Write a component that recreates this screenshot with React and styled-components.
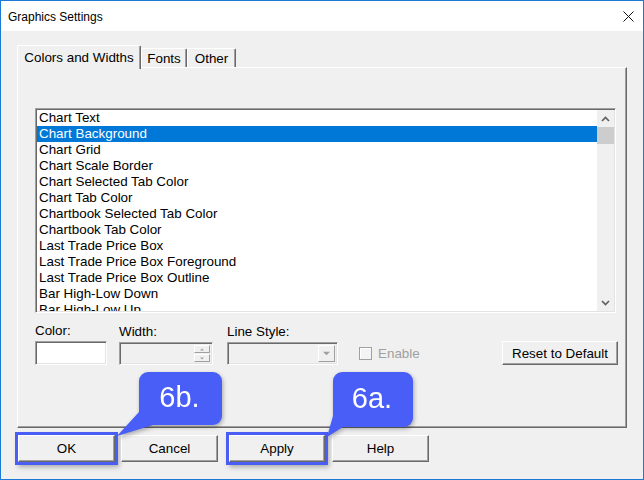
import React, { useState } from 'react';
import styled, { createGlobalStyle } from 'styled-components';

const GlobalStyle = createGlobalStyle`
  html, body {
    margin: 0;
    padding: 0;
    background: #ffffff;
  }
  * {
    box-sizing: border-box;
  }
`;

const items = [
  'Chart Text',
  'Chart Background',
  'Chart Grid',
  'Chart Scale Border',
  'Chart Selected Tab Color',
  'Chart Tab Color',
  'Chartbook Selected Tab Color',
  'Chartbook Tab Color',
  'Last Trade Price Box',
  'Last Trade Price Box Foreground',
  'Last Trade Price Box Outline',
  'Bar High-Low Down',
  'Bar High-Low Up',
];

const Window = styled.div`
  position: relative;
  width: 644px;
  height: 480px;
  border: 1px solid #1c7ad6;
  display: flex;
  flex-direction: column;
  background: #f0f0f0;
  font-family: "Liberation Sans", Arial, sans-serif;
  font-size: 13px;
  color: #000;
`;

const TitleBar = styled.div`
  height: 30px;
  flex: none;
  background: #ffffff;
  display: flex;
  align-items: center;
  justify-content: space-between;
  padding: 1px 9px 0 7px;
  font-size: 12px;
`;

const Body = styled.div`
  flex: 1;
  display: flex;
  flex-direction: column;
  padding: 14px 0 0 16px;
`;

const TabStrip = styled.div`
  height: 22px;
  display: flex;
  align-items: flex-end;
`;

const Tab = styled.div`
  position: relative;
  z-index: ${(p) => (p.$active ? 2 : 1)};
  width: ${(p) => p.$w}px;
  height: ${(p) => (p.$active ? 24 : 19)}px;
  margin-bottom: ${(p) => (p.$active ? -2 : 0)}px;
  background: #f0f0f0;
  border-top: 1px solid #ffffff;
  border-left: 1px solid #ffffff;
  border-right: 1px solid #696969;
  box-shadow: inset -1px 0 #a0a0a0;
  border-radius: 2px 2px 0 0;
  display: flex;
  align-items: ${(p) => (p.$active ? 'flex-start' : 'center')};
  justify-content: center;
  padding-top: ${(p) => (p.$active ? 4 : 1)}px;
  font-size: 13.4px;
`;

const Panel = styled.div`
  width: 610px;
  height: 361px;
  border-top: 1px solid #ffffff;
  border-left: 1px solid #ffffff;
  border-right: 1px solid #696969;
  border-bottom: 1px solid #696969;
  box-shadow: inset -1px -1px #a0a0a0;
  padding: 40px 8px 0 17px;
  display: flex;
  flex-direction: column;
`;

const ListBox = styled.div`
  width: 581px;
  height: 205px;
  border: 1px solid;
  border-color: #a0a0a0 #ffffff #ffffff #a0a0a0;
  box-shadow: inset 1px 1px #696969, inset -1px -1px #e3e3e3;
  padding: 1px;
  display: flex;
  background: #ffffff;
`;

const Items = styled.div`
  flex: 1;
  overflow: hidden;
`;

const Row = styled.div`
  height: 16px;
  line-height: 16px;
  padding-left: 2px;
  white-space: nowrap;
  font-size: 13.4px;
  background: ${(p) => (p.$selected ? '#0078d7' : 'transparent')};
  color: ${(p) => (p.$selected ? '#ffffff' : '#000000')};
`;

const ScrollBar = styled.div`
  width: 17px;
  background: #f0f0f0;
  display: flex;
  flex-direction: column;
`;

const ScrollArrow = styled.div`
  height: 17px;
  display: flex;
  align-items: center;
  justify-content: center;
`;

const Thumb = styled.div`
  height: 17px;
  background: #cdcdcd;
`;

const Track = styled.div`
  flex: 1;
`;

const Controls = styled.div`
  display: flex;
  align-items: flex-end;
  margin-top: 10px;
`;

const Column = styled.div`
  display: flex;
  flex-direction: column;
  width: ${(p) => p.$w}px;
  margin-left: ${(p) => p.$ml || 0}px;
`;

const Label = styled.div`
  height: 16px;
  line-height: 16px;
  margin-bottom: 2px;
  font-size: 13.4px;
`;

const Sunken = styled.div`
  height: ${(p) => p.$h || 23}px;
  border: 1px solid;
  border-color: #a0a0a0 #ffffff #ffffff #a0a0a0;
  box-shadow: inset 1px 1px #696969, inset -1px -1px #e3e3e3;
  background: ${(p) => (p.$white ? '#ffffff' : '#f0f0f0')};
  display: flex;
  justify-content: flex-end;
  padding: 2px;
`;

const SpinStack = styled.div`
  width: 16px;
  display: flex;
  flex-direction: column;
  gap: 1px;
`;

const SpinButton = styled.div`
  flex: 1;
  background: #f0f0f0;
  border: 1px solid;
  border-color: #ffffff #a0a0a0 #a0a0a0 #ffffff;
  display: flex;
  align-items: center;
  justify-content: center;
`;

const DropButton = styled.div`
  width: 17px;
  background: #f0f0f0;
  border: 1px solid;
  border-color: #ffffff #a0a0a0 #a0a0a0 #ffffff;
  display: flex;
  align-items: center;
  justify-content: center;
`;

const CheckRow = styled.div`
  height: 24px;
  display: flex;
  align-items: center;
  gap: 6px;
  color: #a0a0a0;
  margin-left: 21px;
  font-size: 13.4px;
`;

const CheckBox = styled.div`
  width: 13px;
  height: 13px;
  border: 1px solid #a0a0a0;
  background: #f4f4f4;
  box-shadow: inset 1px 1px #ffffff;
`;

const Button = styled.div`
  width: ${(p) => p.$w || 97}px;
  height: ${(p) => p.$h || 27}px;
  margin-left: ${(p) => (p.$auto ? 'auto' : `${p.$ml || 0}px`)};
  background: #f0f0f0;
  border: 1px solid;
  border-color: #ffffff #696969 #696969 #ffffff;
  box-shadow: ${(p) =>
    p.$hl
      ? 'inset -1px -1px #a0a0a0, 0 0 0 3px #4a5ef6, 2px 3px 5px 2px rgba(0,0,0,0.3)'
      : 'inset -1px -1px #a0a0a0'};
  display: flex;
  align-items: center;
  justify-content: center;
  font-size: 13.4px;
`;

const ButtonRow = styled.div`
  display: flex;
  margin-top: 7px;
  padding-left: 1px;
`;

const Callout = styled.div`
  position: absolute;
  left: ${(p) => p.$x}px;
  top: ${(p) => p.$y}px;
  width: ${(p) => p.$w}px;
  height: ${(p) => p.$h}px;
  background: #485ef7;
  border-radius: 9px;
  color: #ffffff;
  font-family: "Liberation Sans", Arial, sans-serif;
  font-size: 29px;
  display: flex;
  align-items: center;
  justify-content: center;
  padding: 0 2px 2px 0;
  filter: drop-shadow(1px 2px 2px rgba(0, 0, 0, 0.3));
  z-index: 5;

  &::after {
    content: '';
    position: absolute;
    left: ${(p) => p.$tx}px;
    top: ${(p) => p.$ty}px;
    width: ${(p) => p.$tw}px;
    height: ${(p) => p.$th}px;
    background: #485ef7;
    clip-path: ${(p) => p.$clip};
  }
`;

const Chevron = ({ up }) => (
  <svg width="9" height="6" viewBox="0 0 9 6">
    <path
      d={up ? 'M1 5 L4.5 1.5 L8 5' : 'M1 1 L4.5 4.5 L8 1'}
      fill="none"
      stroke="#606060"
      strokeWidth="1.7"
    />
  </svg>
);

const Tri = ({ up, size = 5 }) => (
  <svg width={size} height={Math.ceil(size / 2) + 1} viewBox="0 0 6 4">
    <path d={up ? 'M0 3.5 L3 0.5 L6 3.5 Z' : 'M0 0.5 L3 3.5 L6 0.5 Z'} fill="#a0a0a0" />
  </svg>
);

const CloseIcon = () => (
  <svg width="11" height="11" viewBox="0 0 11 11">
    <path d="M0.5 0.5 L10.5 10.5 M10.5 0.5 L0.5 10.5" stroke="#111" strokeWidth="1" />
  </svg>
);

const App = () => {
  const [selected, setSelected] = useState(1);

  return (
    <>
      <GlobalStyle />
      <Window>
        <TitleBar>
          <span>Graphics Settings</span>
          <CloseIcon />
        </TitleBar>
        <Body>
          <TabStrip>
            <Tab $active $w={124}>Colors and Widths</Tab>
            <Tab $w={46}>Fonts</Tab>
            <Tab $w={49}>Other</Tab>
          </TabStrip>
          <Panel>
            <ListBox>
              <Items>
                {items.map((it, i) => (
                  <Row key={it} $selected={i === selected} onClick={() => setSelected(i)}>
                    {it}
                  </Row>
                ))}
              </Items>
              <ScrollBar>
                <ScrollArrow>
                  <Chevron up />
                </ScrollArrow>
                <Thumb />
                <Track />
                <ScrollArrow>
                  <Chevron />
                </ScrollArrow>
              </ScrollBar>
            </ListBox>
            <Controls>
              <Column $w={72}>
                <Label>Color:</Label>
                <Sunken $white $h={24} />
              </Column>
              <Column $w={94} $ml={12}>
                <Label>Width:</Label>
                <Sunken>
                  <SpinStack>
                    <SpinButton>
                      <Tri up size={4} />
                    </SpinButton>
                    <SpinButton>
                      <Tri size={4} />
                    </SpinButton>
                  </SpinStack>
                </Sunken>
              </Column>
              <Column $w={111} $ml={14}>
                <Label>Line Style:</Label>
                <Sunken>
                  <DropButton>
                    <Tri size={7} />
                  </DropButton>
                </Sunken>
              </Column>
              <CheckRow>
                <CheckBox />
                <span>Enable</span>
              </CheckRow>
              <Button $auto $w={116} $h={24}>
                Reset to Default
              </Button>
            </Controls>
          </Panel>
          <ButtonRow>
            <Button $hl>OK</Button>
            <Button $ml={6}>Cancel</Button>
            <Button $ml={11} $w={96} $hl>
              Apply
            </Button>
            <Button $ml={7}>Help</Button>
          </ButtonRow>
        </Body>
        <Callout
          $x={138}
          $y={371}
          $w={83}
          $h={53}
          $tx={-22}
          $ty={40}
          $tw={36}
          $th={24}
          $clip="polygon(22px 0, 36px 13px, 0 24px)"
        >
          6b.
        </Callout>
        <Callout
          $x={332}
          $y={371}
          $w={80}
          $h={55}
          $tx={-6}
          $ty={44}
          $tw={16}
          $th={21}
          $clip="polygon(6px 0, 16px 11px, 0 21px)"
        >
          6a.
        </Callout>
      </Window>
    </>
  );
};

export default App;
